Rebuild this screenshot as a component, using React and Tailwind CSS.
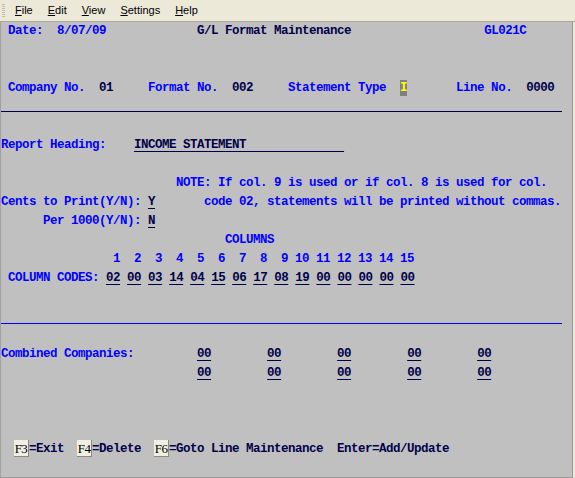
import React from "react";

const LABEL = "text-[#0000ff]";
const VALUE = "text-[#00004a]";

// one 19px terminal line, characters on a 7px grid
function Row({ children }) {
  return <div className="h-[19px] leading-[19px] whitespace-pre">{children}</div>;
}

function Field({ children }) {
  return (
    <span className={`${VALUE} underline decoration-1 underline-offset-[3px]`}>
      {children}
    </span>
  );
}

function Key({ label }) {
  return (
    <span className="inline-block w-[15px] h-[17px] leading-[17px] align-middle bg-[#f1efe2] border-r border-b border-[#8a8a80] text-black text-[13px] font-normal tracking-[-0.5px] text-center font-['Liberation_Serif',serif] -ml-px">
      {label}
    </span>
  );
}

function Separator({ offset, color }) {
  return (
    <div className={`h-[19px] ${offset}`}>
      <div className={`h-px w-[561px] ${color}`} />
    </div>
  );
}

const pad = (n) => " ".repeat(n);
const columnNumbers = Array.from({ length: 15 }, (_, i) => String(i + 1).padStart(2, " ")).join(" ");
const columnCodes = ["02", "00", "03", "14", "04", "15", "06", "17", "08", "19", "00", "00", "00", "00", "00"];

function CompanyRow() {
  return (
    <>
      {[0, 1, 2, 3, 4].map((i) => (
        <React.Fragment key={i}>
          <Field>00</Field>
          {i < 4 ? pad(8) : null}
        </React.Fragment>
      ))}
    </>
  );
}

export default function App() {
  return (
    <div className="w-[575px] h-[478px] bg-[#ece9d8] overflow-hidden">
      {/* Menu bar */}
      <div className="h-[22px] flex items-center border-b border-[#aca899] relative">
        <div className="absolute left-[2px] top-[4px] h-[14px] w-[3px] bg-[repeating-linear-gradient(to_bottom,#c1bdb0_0px,#c1bdb0_1px,transparent_1px,transparent_2px)]" />
        <div className="flex gap-[15px] pl-[15px] text-[11px] text-black font-['Liberation_Sans',Arial,sans-serif]">
          <span><u>F</u>ile</span>
          <span><u>E</u>dit</span>
          <span><u>V</u>iew</span>
          <span><u>S</u>ettings</span>
          <span><u>H</u>elp</span>
        </div>
      </div>

      {/* Terminal screen */}
      <div className="w-[573px] h-[456px] bg-[#c0c0c0] border-l border-r border-b border-l-[#a0a0a0] border-r-[#9a9a94] border-b-[#9a9a94] font-['Liberation_Mono',monospace] font-bold text-[12.5px] tracking-[-0.5px]">
        <Row>
          <span className={LABEL}>{" Date:  8/07/09"}</span>
          {pad(13)}
          <span className={VALUE}>G/L Format Maintenance</span>
          {pad(19)}
          <span className={LABEL}>GL021C</span>
        </Row>
        <Row />
        <Row />
        <Row>
          <span className={LABEL}>{" Company No."}</span>
          <span className={VALUE}>{"  01"}</span>
          <span className={LABEL}>{pad(5) + "Format No."}</span>
          <span className={VALUE}>{"  002"}</span>
          <span className={LABEL}>{pad(5) + "Statement Type  "}</span>
          <span className="inline-block w-[7px] h-[16px] leading-[16px] align-middle bg-[#808080] text-[#ffff00] text-center tracking-normal">I</span>
          <span className={LABEL}>{pad(7) + "Line No."}</span>
          <span className={VALUE}>{"  0000"}</span>
        </Row>
        <Separator offset="pt-[13px]" color="bg-[#000050]" />
        <Row />
        <Row>
          <span className={LABEL}>{"Report Heading:" + pad(4)}</span>
          <Field>{"INCOME STATEMENT" + pad(14)}</Field>
        </Row>
        <Row />
        <Row>
          <span className={LABEL}>{pad(25) + "NOTE: If col. 9 is used or if col. 8 is used for col."}</span>
        </Row>
        <Row>
          <span className={LABEL}>{"Cents to Print(Y/N): "}</span>
          <Field>Y</Field>
          <span className={LABEL}>{pad(7) + "code 02, statements will be printed without commas."}</span>
        </Row>
        <Row>
          <span className={LABEL}>{pad(6) + "Per 1000(Y/N): "}</span>
          <Field>N</Field>
        </Row>
        <Row>
          <span className={LABEL}>{pad(32) + "COLUMNS"}</span>
        </Row>
        <Row>
          <span className={LABEL}>{pad(15) + columnNumbers}</span>
        </Row>
        <Row>
          <span className={LABEL}>{" COLUMN CODES: "}</span>
          {columnCodes.map((code, i) => (
            <React.Fragment key={i}>
              <Field>{code}</Field>
              {i < columnCodes.length - 1 ? " " : null}
            </React.Fragment>
          ))}
        </Row>
        <Row />
        <Separator offset="pt-[16px]" color="bg-[#0000ff]" />
        <Row />
        <Row>
          <span className={LABEL}>{"Combined Companies:" + pad(9)}</span>
          <CompanyRow />
        </Row>
        <Row>
          {pad(28)}
          <CompanyRow />
        </Row>
        <Row />
        <Row />
        <Row />
        <Row>
          <span className={VALUE}>
            {"  "}
            <Key label="F3" />
            {"=Exit  "}
            <Key label="F4" />
            {"=Delete  "}
            <Key label="F6" />
            {"=Goto Line Maintenance  Enter=Add/Update"}
          </span>
        </Row>
      </div>
    </div>
  );
}
